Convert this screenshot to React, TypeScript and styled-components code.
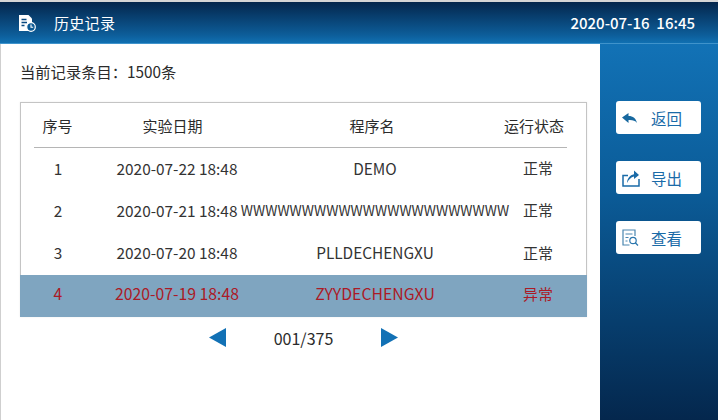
import React from "react";
import styled, { createGlobalStyle } from "styled-components";

const GlobalStyle = createGlobalStyle`
  html, body {
    margin: 0;
    padding: 0;
    background: #fff;
  }
  body {
    font-family: "Noto Sans CJK SC", "Noto Sans", sans-serif;
    color: #2b2b2b;
  }
`;

const Screen = styled.div`
  width: 718px;
  height: 420px;
  box-sizing: border-box;
  border-top: 2px solid #d6d6d6;
  display: flex;
  flex-direction: column;
  overflow: hidden;
`;

const TopBar = styled.header`
  height: 41px;
  flex: none;
  display: flex;
  align-items: center;
  justify-content: space-between;
  padding: 0 23px 0 19px;
  background: linear-gradient(180deg, #04264c 0%, #0d5d99 80%, #1070b2 100%);
  border-bottom: 1px solid #3f93cb;
  color: #fff;
`;

const TitleGroup = styled.div`
  display: flex;
  align-items: center;
  gap: 18px;
`;

const Title = styled.span`
  font-size: 15px;
  letter-spacing: 0.3px;
`;

const Clock = styled.span`
  font-size: 15px;
  font-weight: 500;
  white-space: pre;
`;

const Body = styled.div`
  flex: 1;
  display: flex;
  min-height: 0;
`;

const Main = styled.main`
  width: 600px;
  box-sizing: border-box;
  border-left: 1px solid #cfcfcf;
  padding: 16px 13px 0 19px;
`;

const RecordCount = styled.div`
  font-size: 15.3px;
  line-height: 22px;
  margin-bottom: 20px;
`;

const Table = styled.div`
  border: 1px solid #c4c4c4;
  border-bottom: 0;
  box-shadow: 0 0 2px rgba(0, 0, 0, 0.08);
`;

const HeadRow = styled.div`
  height: 44px;
  margin: 0 19px 0 13px;
  display: grid;
  grid-template-columns: 47px 183px 216px 1fr;
  align-items: center;
  border-bottom: 1px solid #b5b5b5;
  font-size: 15px;
  text-align: center;
`;

const StatusHead = styled.span`
  text-align: left;
  padding-left: 24px;
  white-space: nowrap;
`;

const Row = styled.div<{ $selected?: boolean }>`
  box-sizing: border-box;
  height: ${(p) => (p.$selected ? "42px" : "42.33px")};
  margin: ${(p) => (p.$selected ? "0 -1px" : "0")};
  padding: ${(p) => (p.$selected ? "0 23px 5px 14px" : "0 22px 3px 13px")};
  display: grid;
  grid-template-columns: 80px 126px 270px 54px;
  align-items: center;
  text-align: center;
  font-size: ${(p) => (p.$selected ? "15.8px" : "15.4px")};
  white-space: nowrap;
  background: ${(p) => (p.$selected ? "#7fa5c0" : "transparent")};
  color: ${(p) => (p.$selected ? "#ab1a26" : "#333")};
`;

const SeqCell = styled.span`
  padding-right: 32px;
`;

const NameCell = styled.span<{ $tight?: boolean }>`
  display: flex;
  justify-content: center;
  font-size: ${(p) => (p.$tight ? "13.9px" : "inherit")};
`;

const StatusCell = styled.span`
  padding-left: 2px;
  font-size: 15px;
`;

const Pager = styled.div`
  margin-top: 9px;
  display: flex;
  align-items: center;
  justify-content: center;
  gap: 48px;
  font-size: 16px;
  line-height: 24px;
`;

const PagerArrow = styled.svg`
  width: 17px;
  height: 19px;
  display: block;
  fill: #1271b5;
`;

const Side = styled.aside`
  flex: 1;
  box-sizing: border-box;
  padding: 57px 17px 0 16px;
  display: flex;
  flex-direction: column;
  gap: 27px;
  background: linear-gradient(180deg, #1272b6 0%, #0b5b97 40%, #04274d 100%);
`;

const ActionButton = styled.button`
  height: 33px;
  border: 0;
  border-radius: 3px;
  background: #fff;
  padding: 0 0 0 5px;
  display: flex;
  align-items: center;
  font-family: inherit;
  font-size: 15.5px;
  color: #1a6ba8;
`;

const ActionIcon = styled.svg`
  width: 19px;
  height: 19px;
  flex: none;
  margin-right: 11px;
`;

const rows = [
  { seq: 1, date: "2020-07-22 18:48", name: "DEMO", status: "正常" },
  { seq: 2, date: "2020-07-21 18:48", name: "WWWWWWWWWWWWWWWWWWWWWW", status: "正常", tight: true },
  { seq: 3, date: "2020-07-20 18:48", name: "PLLDECHENGXU", status: "正常" },
  { seq: 4, date: "2020-07-19 18:48", name: "ZYYDECHENGXU", status: "异常", selected: true },
];

const HistoryIcon = () => (
  <svg width="17" height="18" viewBox="0 0 17 18">
    <path d="M0 1h9.500L13 4.500V17H0z" fill="#fff" />
    <path d="M2.500 5.500h5M2.500 8.500h5.500M2.500 11.500h3" stroke="#0a4a80" strokeWidth="1.300" />
    <circle cx="12" cy="13" r="4.300" fill="#0c5a94" stroke="#fff" strokeWidth="1.200" />
    <path d="M12 10.500V13.300h2.200" fill="none" stroke="#fff" strokeWidth="1.100" />
  </svg>
);

const App = () => {
  return (
    <Screen>
      <GlobalStyle />
      <TopBar>
        <TitleGroup>
          <HistoryIcon />
          <Title>历史记录</Title>
        </TitleGroup>
        <Clock>2020-07-16  16:45</Clock>
      </TopBar>
      <Body>
        <Main>
          <RecordCount>当前记录条目：1500条</RecordCount>
          <Table>
            <HeadRow>
              <span>序号</span>
              <span>实验日期</span>
              <span>程序名</span>
              <StatusHead>运行状态</StatusHead>
            </HeadRow>
            {rows.map((row) => (
              <Row key={row.seq} $selected={row.selected}>
                <SeqCell>{row.seq}</SeqCell>
                <span>{row.date}</span>
                <NameCell $tight={row.tight}>{row.name}</NameCell>
                <StatusCell>{row.status}</StatusCell>
              </Row>
            ))}
          </Table>
          <Pager>
            <PagerArrow viewBox="0 0 17 19">
              <path d="M0 9.500 17 0v19z" />
            </PagerArrow>
            <span>001/375</span>
            <PagerArrow viewBox="0 0 17 19">
              <path d="M17 9.500 0 0v19z" />
            </PagerArrow>
          </Pager>
        </Main>
        <Side>
          <ActionButton>
            <ActionIcon viewBox="0 0 19 19">
              <path d="M1 9.500 7.500 5v3c4.500 0 7.500 2.500 8.500 7-1.800-2.500-4.500-3.200-8.500-3v3z" fill="#17689f" />
            </ActionIcon>
            <span>返回</span>
          </ActionButton>
          <ActionButton>
            <ActionIcon viewBox="0 0 19 19">
              <path d="M7 7.500H2V18h16v-7" fill="none" stroke="#1a6ba8" strokeWidth="1.500" />
              <path d="M6 15c.3-4.500 2.800-8 7-8.700V2.500l5 4.600-5 3.900V8.500c-3 .6-5.200 3-7 6.500z" fill="#1a6ba8" />
            </ActionIcon>
            <span>导出</span>
          </ActionButton>
          <ActionButton>
            <ActionIcon viewBox="0 0 19 19">
              <path d="M8.500 17H2V2h12v6" fill="none" stroke="#4a86b0" strokeWidth="1.200" />
              <path d="M4.500 6h7M4.500 9.500h3M4.500 13h2" stroke="#4a86b0" strokeWidth="1.200" />
              <circle cx="12" cy="12.500" r="3.200" fill="none" stroke="#2a76ad" strokeWidth="1.200" />
              <path d="m14.300 14.800 2.700 2.700" stroke="#2a76ad" strokeWidth="1.300" />
            </ActionIcon>
            <span>查看</span>
          </ActionButton>
        </Side>
      </Body>
    </Screen>
  );
};

export default App;
